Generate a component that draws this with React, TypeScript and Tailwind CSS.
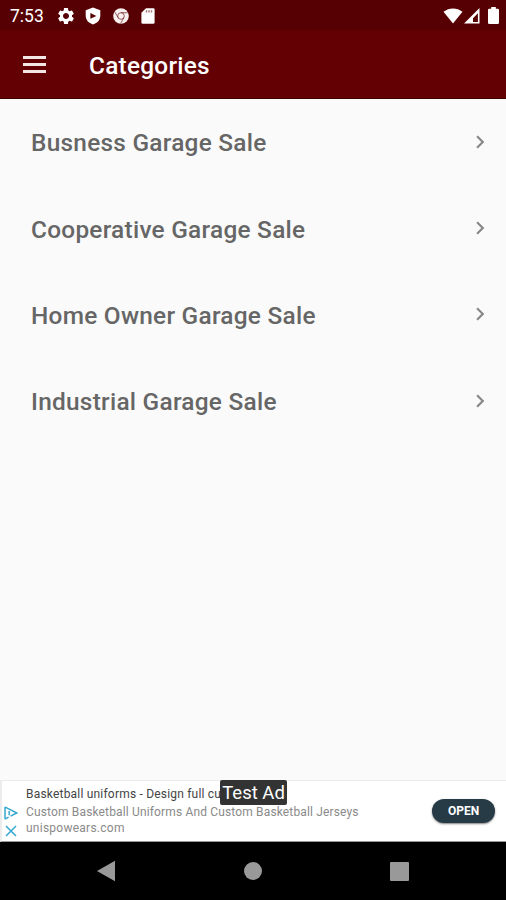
import React from 'react';
import { MdChevronRight, MdSettings } from 'react-icons/md';

const CATEGORIES = [
  { id: 'business', name: 'Busness Garage Sale' },
  { id: 'cooperative', name: 'Cooperative Garage Sale' },
  { id: 'home-owner', name: 'Home Owner Garage Sale' },
  { id: 'industrial', name: 'Industrial Garage Sale' },
];

function ShieldIcon() {
  return (
    <svg width="16" height="18" viewBox="0 0 16 18">
      <path d="M8 0.5 15.3 3.3V8.5C15.3 13 12.4 16 8 17.5C3.6 16 0.7 13 0.7 8.5V3.3Z" fill="#fff" />
      <path d="M5.4 6 11.4 9 5.4 11.8Z" fill="#560003" />
    </svg>
  );
}

function ChromeIcon() {
  return (
    <svg width="16" height="16" viewBox="0 0 16 16">
      <circle cx="8" cy="8" r="7.8" fill="#f8eeee" />
      <g fill="none" stroke="#560003" strokeOpacity="0.75" strokeWidth="0.8">
        <circle cx="8" cy="8" r="3.3" />
        <path d="M8 4.7H14.6M5.1 9.6 1.9 4.1M10.9 9.6 7.7 15.4" />
      </g>
    </svg>
  );
}

function SdCardIcon() {
  return (
    <svg width="14" height="16" viewBox="0 0 14 16">
      <path d="M5 0.3H12.2Q13.6 0.3 13.6 1.6V14.4Q13.6 15.7 12.2 15.7H1.8Q0.4 15.7 0.4 14.4V4.8Z" fill="#fff" />
      <path d="M5.5 2.2V4.4M8 2.2V4.4M10.5 2.2V4.4" stroke="#560003" strokeOpacity="0.55" strokeWidth="1.4" />
    </svg>
  );
}

function StatusBar() {
  return (
    <div className="flex h-[30px] items-center bg-[#560003] pt-px pl-[10px] pr-[7px] text-white">
      <span className="w-[46px] pt-[2px] text-[17.5px] leading-none">7:53</span>
      <div className="flex items-center">
        <MdSettings size={20} />
        <div className="ml-[9px]"><ShieldIcon /></div>
        <div className="ml-[12px]"><ChromeIcon /></div>
        <div className="ml-[12px]"><SdCardIcon /></div>
      </div>
      <div className="ml-auto flex items-center">
        {/* Wifi */}
        <svg width="20" height="16" viewBox="0 0 20 16">
          <path d="M0.5 3.8C6 -0.7 14 -0.7 19.5 3.8L10 15.6Z" fill="#fff" />
        </svg>
        {/* Mobile signal */}
        <svg width="16" height="16" viewBox="0 0 16 16" className="ml-px">
          <path fillRule="evenodd" d="M15.5 0V15.5H0ZM13.9 5.2 9 10.2V13.9H13.9Z" fill="#fff" />
        </svg>
        {/* Battery */}
        <svg width="11" height="17" viewBox="0 0 11 17" className="ml-2">
          <path d="M3.2 0H7.8V1.7H9.7Q11 1.7 11 3V15.7Q11 17 9.7 17H1.3Q0 17 0 15.7V3Q0 1.7 1.3 1.7H3.2Z" fill="#fff" />
        </svg>
      </div>
    </div>
  );
}

function Header() {
  return (
    <header className="flex h-[69px] items-center border-b border-[#3a0000] bg-[#630003] pl-[23px] text-white">
      <button type="button" aria-label="Open menu" className="flex w-[23px] flex-col gap-1">
        <span className="h-[3px] bg-[#f5e6e6]" />
        <span className="h-[3px] bg-[#f5e6e6]" />
        <span className="h-[3px] bg-[#f5e6e6]" />
      </button>
      <h1 className="ml-[43px] pt-[4px] text-[24.4px] leading-none font-medium tracking-[0.25px]">Categories</h1>
    </header>
  );
}

function CategoryRow({ name }: { name: string }) {
  return (
    <li className="flex h-[86.2px] items-center justify-between pl-[31px] pr-[13px] text-[#666]">
      <span className="pt-[3px] text-[24.4px] leading-none font-medium tracking-[0.26px]">{name}</span>
      <MdChevronRight size={26} className="text-[#888]" />
    </li>
  );
}

function AdBanner() {
  return (
    <div className="relative flex h-[62px] items-center border-t border-b border-l-2 border-[#ececec] border-b-[#999] bg-white pr-[11px]">
      <div className="flex w-[18px] flex-col items-center gap-[5px] self-end pb-[4px]">
        <svg width="14" height="14" viewBox="0 0 14 14" fill="none" stroke="#35a8d0" strokeWidth="1.5">
          <path d="M4.6 11.2 1.8 12.6Q1 13 1 12V2Q1 1 1.8 1.4L12.8 7 6.5 10.2M5.2 5V9.2" />
        </svg>
        <svg width="12" height="12" viewBox="0 0 12 12" stroke="#35a8d0" strokeWidth="1.5">
          <path d="M1 1 11 11M11 1 1 11" />
        </svg>
      </div>
      <div className="ml-[6px] flex-1 pb-[2px] whitespace-nowrap text-[12px] text-[#8a8a8a]">
        <p className="leading-[18px] tracking-[0.2px] text-[#444]">Basketball uniforms - Design full cu</p>
        <p className="leading-[18px] tracking-[0.15px]">Custom Basketball Uniforms And Custom Basketball Jerseys</p>
        <p className="leading-[15px] tracking-[0.25px]">unispowears.com</p>
      </div>
      <button
        type="button"
        className="mb-px h-[24px] w-[63px] rounded-full bg-[#263b46] text-[12px] font-bold text-white shadow-[0_1px_2px_rgba(0,0,0,0.5)]"
      >
        OPEN
      </button>
      <span className="absolute left-[218px] top-[-1px] flex h-[25px] w-[67px] items-center justify-center rounded-[2px] bg-[#333] pt-[3px] text-[18.5px] whitespace-nowrap text-white">
        Test Ad
      </span>
    </div>
  );
}

function NavigationBar() {
  return (
    <nav className="flex h-[58px] items-center justify-between bg-black pl-[96px] pr-[97px]">
      <svg width="20" height="22" viewBox="0 0 20 22">
        <path d="M19 0.8V21.2L1 11Z" fill="#999" />
      </svg>
      <div className="size-[18px] rounded-full bg-[#999]" />
      <div className="size-[19px] rounded-[1px] bg-[#999]" />
    </nav>
  );
}

export default function App() {
  return (
    <div className="flex h-screen w-full flex-col overflow-hidden bg-[#fafafa] font-['Roboto',sans-serif]">
      <StatusBar />
      <Header />
      <main className="flex-1">
        <ul>
          {CATEGORIES.map((category) => (
            <CategoryRow key={category.id} name={category.name} />
          ))}
        </ul>
      </main>
      <AdBanner />
      <NavigationBar />
    </div>
  );
}
